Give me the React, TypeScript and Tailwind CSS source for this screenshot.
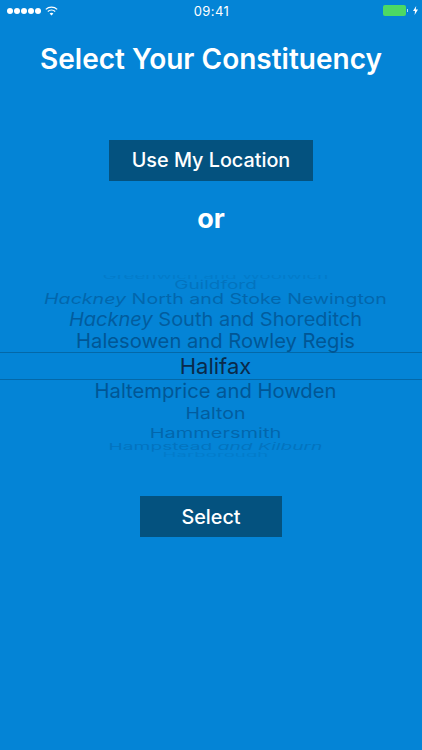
const font = { fontFamily: "Inter, 'Liberation Sans', sans-serif" };

const rows = [
  { h: "h-[4px]", text: <>Greenwich and Woolwich</>, cls: "scale-y-[0.4] text-[18.8px] leading-[0.7] opacity-[0.09]" },
  { h: "h-[14px]", text: <>Guildford</>, cls: "scale-y-[0.6] text-[19px] leading-[0.8] opacity-[0.18]" },
  { h: "h-[14px]", text: <><i>Hackney</i> North and Stoke Newington</>, cls: "scale-y-[0.75] text-[19.6px] leading-[0.9] opacity-[0.32]" },
  { h: "h-[24px]", text: <><i>Hackney</i> South and Shoreditch</>, cls: "scale-y-[0.93] text-[20px] leading-none opacity-[0.43]" },
  { h: "h-[21px]", text: <>Halesowen and Rowley Regis</>, cls: "text-[20.2px] leading-none opacity-[0.5]" },
  { h: "h-[28px]", text: <>Halifax</>, cls: "text-[22px] leading-none text-[#0a2a4a]" },
  { h: "h-[23px]", text: <>Haltemprice and Howden</>, cls: "text-[20.2px] leading-none opacity-[0.5]" },
  { h: "h-[21px]", text: <>Halton</>, cls: "scale-y-[0.85] text-[19.5px] leading-none opacity-[0.43]" },
  { h: "h-[17px]", text: <>Hammersmith</>, cls: "scale-y-[0.67] text-[20px] leading-none opacity-[0.32]" },
  { h: "h-[11px]", text: <>Hampstead <i>and Kilburn</i></>, cls: "scale-y-[0.5] text-[19.2px] leading-[0.8] opacity-[0.18]" },
  { h: "h-[5px]", text: <>Harborough</>, cls: "scale-y-[0.35] text-[18.7px] leading-[0.7] opacity-[0.09]" },
];

function StatusBar() {
  return (
    <div className="relative flex h-[21px] items-center justify-between pl-[7px] pr-[4px] text-white">
      <div className="flex items-center gap-[4px]">
        <div className="flex gap-[1px]">
          {[0, 1, 2, 3, 4].map((i) => (
            <div key={i} className="h-[6px] w-[6px] rounded-full bg-white" />
          ))}
        </div>
        <svg width="13" height="10" viewBox="0 0 13 10" fill="none" stroke="white">
          <path d="M0.8 3.4C4 0.3 9 0.3 12.2 3.4" strokeWidth="1.2" />
          <path d="M2.8 5.5C4.9 3.6 8.1 3.6 10.2 5.5" strokeWidth="1.2" />
          <path d="M6.5 9.6L4.6 7.5C5.7 6.6 7.3 6.6 8.4 7.5Z" fill="white" stroke="none" />
        </svg>
      </div>
      <div className="absolute left-[1px] right-0 top-[3px] text-center text-[13px] leading-[17px] tracking-[0.4px]">09:41</div>
      <div className="flex items-center">
        <div className="h-[11px] w-[23px] rounded-[2px] bg-[#4cd964]" />
        <div className="ml-[1px] h-[3px] w-[1px] bg-white/70" />
        <svg className="ml-[5px]" width="5" height="9" viewBox="0 0 5 9" fill="white">
          <path d="M3.2 0L0 5H2L1.6 9L5 3.6H2.8Z" />
        </svg>
      </div>
    </div>
  );
}

export default function App() {
  return (
    <div className="h-[750px] w-[422px] overflow-hidden bg-[#0484d6]" style={font}>
      <StatusBar />
      <h1 className="mt-[21px] text-center text-[28px] font-semibold leading-[34px] text-white">
        Select Your Constituency
      </h1>

      <div className="mt-[64px] flex justify-center">
        <button className="h-[41px] w-[204px] bg-[#04527f] text-[19.8px] font-medium text-white">Use My Location</button>
      </div>
      <div className="mt-[21px] text-center text-[27px] font-bold leading-[34px] text-white">or</div>

      <div className="mt-[39px] flex flex-col overflow-hidden">
        {rows.map((row, i) => (
          <div
            key={i}
            className={`flex items-center justify-center whitespace-nowrap pl-[9px] ${row.h} ${
              i === 5 ? "border-y border-[#0468a8]" : ""
            }`}
          >
            <span className={`inline-block origin-center ${row.cls} ${i === 5 ? "" : "text-[#002a55]"}`}>
              {row.text}
            </span>
          </div>
        ))}
      </div>

      <div className="mt-[39px] flex justify-center">
        <button className="h-[41px] w-[142px] bg-[#04527f] pt-[2px] text-[19.8px] font-medium text-white">Select</button>
      </div>
    </div>
  );
}
